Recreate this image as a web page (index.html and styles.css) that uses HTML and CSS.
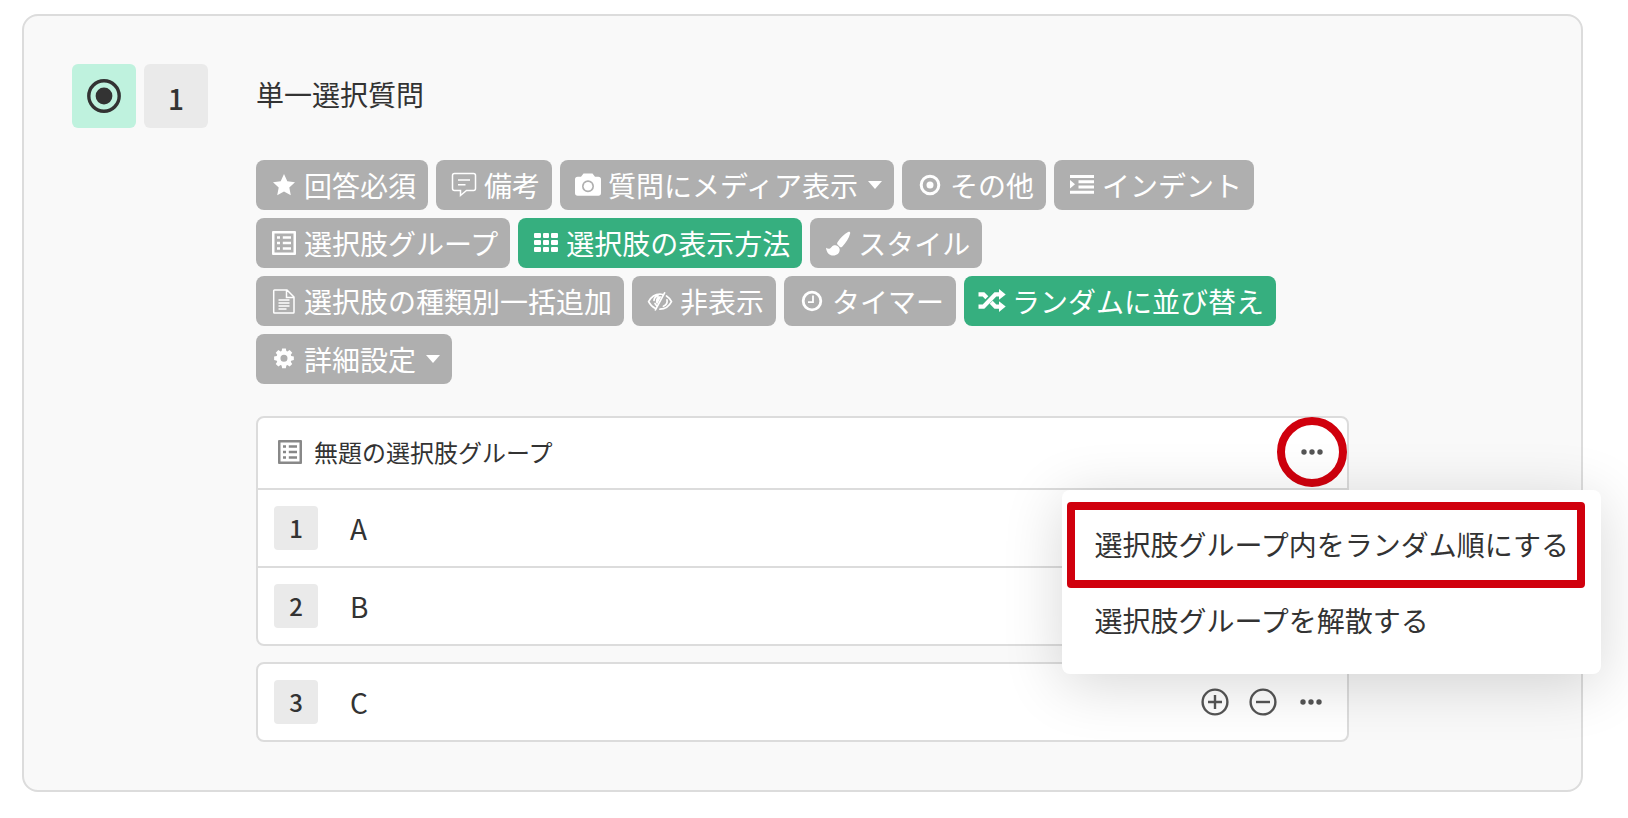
FILE: index.html
```
<!DOCTYPE html>
<html lang="ja">
<head>
<meta charset="utf-8">
<title>単一選択質問</title>
<link rel="stylesheet" href="styles.css">
</head>
<body>
<svg class="defs" aria-hidden="true">
  <symbol id="i-list" viewBox="0 0 24 24"><path fill-rule="evenodd" d="M1 0h22a1 1 0 0 1 1 1v22a1 1 0 0 1-1 1H1a1 1 0 0 1-1-1V1a1 1 0 0 1 1-1zM2.500 2.500v19h19v-19zM5 5.200h3v2.600H5zM10.800 5.200H19v2.600h-8.200zM5 10.800h3v2.400H5zM10.800 10.800H19v2.400h-8.200zM5 16.200h3v2.600H5zM10.800 16.200H19v2.600h-8.200z"/></symbol>
  <symbol id="i-dots" viewBox="0 0 24 24"><circle cx="4" cy="12" r="2.7"/><circle cx="12" cy="12" r="2.7"/><circle cx="20" cy="12" r="2.7"/></symbol>
</svg>
<main class="card">
  <div class="marks">
    <span class="mark mark-type"><svg viewBox="0 0 34 34" width="34" height="34" aria-hidden="true"><circle cx="17" cy="17" r="15.2" fill="none" stroke="currentColor" stroke-width="3.4"/><circle cx="17" cy="17" r="8.4" fill="currentColor"/></svg></span>
    <span class="mark mark-number">1</span>
  </div>
  <section class="question">
    <h1 class="title">単一選択質問</h1>
    <div class="tags">
      <button class="tag"><svg class="icon" viewBox="0 0 32 24"><path d="M16 1l3.300 7.200 7.700 1-5.700 5.300 1.500 7.700L16 18.400l-6.800 3.800 1.500-7.700L5 9.200l7.700-1z"/></svg>回答必須</button>
      <button class="tag"><svg class="icon" viewBox="0 0 32 24"><path fill="none" stroke="currentColor" stroke-width="1.5" d="M6.500.500h19a2 2 0 0 1 2 2v13a2 2 0 0 1-2 2h-7L12.500 22.500v-5h-6a2 2 0 0 1-2-2v-13a2 2 0 0 1 2-2zM10 7h12M10 11.700h7.500"/></svg>備考</button>
      <button class="tag"><svg class="icon" viewBox="0 0 32 24"><path fill-rule="evenodd" d="M11.500.5h9l2.500 3.200h3.300a2.700 2.700 0 0 1 2.700 2.700v13.600a2.700 2.700 0 0 1-2.700 2.700H5.700A2.700 2.700 0 0 1 3 20V6.400a2.700 2.700 0 0 1 2.700-2.700H9zM16 7.300a6 6 0 1 0 0 12 6 6 0 0 0 0-12z"/><circle cx="16" cy="13.300" r="4.300"/></svg>質問にメディア表示<span class="caret"></span></button>
      <button class="tag"><svg class="icon" viewBox="0 0 32 24"><circle cx="16" cy="12" r="8.800" fill="none" stroke="currentColor" stroke-width="3"/><circle cx="16" cy="12" r="3.500"/></svg>その他</button>
      <button class="tag"><svg class="icon" viewBox="0 0 32 24"><path d="M4 2h24v3H4zM12.500 7.200H28v3H12.500zM12.500 12.400H28v3H12.500zM4 17.700h24v3H4zM4 7l5 4.300-5 4.300z"/></svg>インデント</button>
      <button class="tag"><svg class="icon" viewBox="0 0 32 24"><use href="#i-list" x="4" y="0" width="24" height="24"/></svg>選択肢グループ</button>
      <button class="tag tag-on"><svg class="icon" viewBox="0 0 32 24"><path d="M5 2h5a1 1 0 0 1 1 1v3a1 1 0 0 1-1 1H5a1 1 0 0 1-1-1V3a1 1 0 0 1 1-1zM14 2h4a1 1 0 0 1 1 1v3a1 1 0 0 1-1 1h-4a1 1 0 0 1-1-1V3a1 1 0 0 1 1-1zM22 2h5a1 1 0 0 1 1 1v3a1 1 0 0 1-1 1h-5a1 1 0 0 1-1-1V3a1 1 0 0 1 1-1zM5 9h5a1 1 0 0 1 1 1v3a1 1 0 0 1-1 1H5a1 1 0 0 1-1-1v-3a1 1 0 0 1 1-1zM14 9h4a1 1 0 0 1 1 1v3a1 1 0 0 1-1 1h-4a1 1 0 0 1-1-1v-3a1 1 0 0 1 1-1zM22 9h5a1 1 0 0 1 1 1v3a1 1 0 0 1-1 1h-5a1 1 0 0 1-1-1v-3a1 1 0 0 1 1-1zM5 16h5a1 1 0 0 1 1 1v3a1 1 0 0 1-1 1H5a1 1 0 0 1-1-1v-3a1 1 0 0 1 1-1zM14 16h4a1 1 0 0 1 1 1v3a1 1 0 0 1-1 1h-4a1 1 0 0 1-1-1v-3a1 1 0 0 1 1-1zM22 16h5a1 1 0 0 1 1 1v3a1 1 0 0 1-1 1h-5a1 1 0 0 1-1-1v-3a1 1 0 0 1 1-1z"/></svg>選択肢の表示方法</button>
      <button class="tag"><svg class="icon" viewBox="0 0 32 24"><path d="M26.500.8c1-.4 2 .4 1.700 1.500-1.300 5-4 9.500-8 13.400-.8.800-1.800.7-2.500 0l-2-2c-.7-.7-.8-1.600-.2-2.500C18.500 7 22 3.200 26.500.8zM13.500 14.200c2.500.4 4 2 4.200 4.300.1 3.800-2.700 6-6.500 6-3.600 0-6.500-2.300-7.200-7.800 1.400.9 2.800 1.400 3.900.8 1.600-.8 2.200-3.700 5.600-3.300z"/></svg>スタイル</button>
      <button class="tag"><svg class="icon" viewBox="0 0 32 24"><path fill="none" stroke="currentColor" stroke-width="1.500" d="M6.500 1H19l7 7v15.200a.8.800 0 0 1-.8.800H6.500a.8.800 0 0 1-.8-.8V1.800a.8.800 0 0 1 .8-.8zM18.500 1v7.500H26M10.500 11h11M10.500 14h11M10.500 17h11M10.500 20h8"/></svg>選択肢の種類別一括追加</button>
      <button class="tag"><svg class="icon" viewBox="0 0 32 24"><g fill="none" stroke="currentColor" stroke-width="1.700" stroke-linecap="round"><path d="M11.500 19.600C8.500 18.200 6 15.500 4.600 12.700 7 8.200 11.200 5.200 16 5.200c1 0 1.800.1 2.600.3M22.500 6.900c2 1.200 3.800 3.200 5 5.800-2.300 4.500-6.700 7.500-11.500 7.500M11.400 20.900L20.600 3.800M10 11.300c.2-2.200 2-4.100 4-4.500M11 14.500c.4.900 1 1.700 1.800 2.200M23 10.800c.6 2.900-1 5.300-3.600 6.400"/></g><path d="M14.500 7.200h3l-4.300 8c-2-1.500-2-6 1.300-8z"/></svg>非表示</button>
      <button class="tag"><svg class="icon" viewBox="0 0 32 24"><circle cx="16" cy="12" r="8.800" fill="none" stroke="currentColor" stroke-width="2.800"/><path fill="none" stroke="currentColor" stroke-width="1.800" d="M17 6.500v6.700h-5"/></svg>タイマー</button>
      <button class="tag tag-on"><svg class="icon" viewBox="0 0 32 24"><path d="M2.500 3.300h5.800l4 4-3 3L6.700 7.400H2.500zM2.500 15.600h4.200L18.500 3.300H23V0l6.700 5.400L23 10.700V7.400h-2.700L8.300 19.700H2.500zM16.700 11.800l3.600 3.800H23v-3.300l6.700 5.300L23 23v-3.300h-4.500l-4.800-4.900z"/></svg>ランダムに並び替え</button>
      <button class="tag"><svg class="icon" viewBox="0 0 32 24"><path transform="translate(1.900 .8) scale(.88)" fill-rule="evenodd" d="M13.900.7h4.200l.6 3 1.200.5 2.500-1.700 3 3L23.700 8l.5 1.200 3 .6V14l-3 .6-.5 1.200 1.700 2.500-3 3-2.500-1.700-1.200.5-.6 3h-4.200l-.6-3-1.200-.5-2.500 1.700-3-3 1.700-2.500-.5-1.200-3-.6V9.800l3-.6.500-1.200-1.700-2.500 3-3 2.500 1.700 1.200-.5zM16 7.900a4 4 0 1 0 0 8 4 4 0 0 0 0-8z"/></svg>詳細設定<span class="caret"></span></button>
    </div>
    <div class="choices">
      <div class="group">
        <header class="group-head">
          <svg class="group-icon" width="24" height="24" aria-hidden="true"><use href="#i-list"/></svg>
          <h2 class="group-title">無題の選択肢グループ</h2>
          <div class="menu-anchor">
            <button class="act act-ring" aria-label="メニュー"><svg width="24" height="24"><use href="#i-dots"/></svg></button>
            <div class="menu">
              <button class="menu-item menu-item-marked">選択肢グループ内をランダム順にする</button>
              <button class="menu-item">選択肢グループを解散する</button>
            </div>
          </div>
        </header>
        <div class="choice"><span class="choice-number">1</span><span class="choice-text">A</span></div>
        <div class="choice"><span class="choice-number">2</span><span class="choice-text">B</span></div>
      </div>
      <div class="group">
        <div class="choice"><span class="choice-number">3</span><span class="choice-text">C</span>
          <button class="act" aria-label="追加"><svg class="outline" viewBox="0 0 28 28" width="28" height="28"><circle cx="14" cy="14" r="12.400"/><path d="M14 7v14M7 14h14"/></svg></button>
          <button class="act" aria-label="削除"><svg class="outline" viewBox="0 0 28 28" width="28" height="28"><circle cx="14" cy="14" r="12.400"/><path d="M7 14h14"/></svg></button>
          <button class="act" aria-label="メニュー"><svg width="24" height="24"><use href="#i-dots"/></svg></button>
        </div>
      </div>
    </div>
  </section>
</main>
</body>
</html>
```
FILE: styles.css
```
* { box-sizing: border-box; }

body {
  margin: 0;
  padding: 14px 45px 26px 22px;
  background: #fff;
  color: #333;
  font-family: "Noto Sans CJK JP", "Noto Sans", sans-serif;
  font-size: 28px;
  line-height: 40px;
}

button {
  margin: 0;
  padding: 0;
  border: 0;
  background: none;
  color: inherit;
  font: inherit;
  cursor: pointer;
}

svg { fill: currentColor; overflow: visible; }

.defs { position: absolute; width: 0; height: 0; }

.outline { fill: none; stroke: currentColor; stroke-width: 2.4; }

.card {
  display: flex;
  gap: 48px;
  padding: 48px 232px 48px 48px;
  border: 2px solid #dcdcdc;
  border-radius: 16px;
  background: #f9f9f9;
}

.marks { display: flex; flex: none; gap: 8px; }

.mark {
  display: flex;
  align-items: center;
  justify-content: center;
  width: 64px;
  height: 64px;
  border-radius: 6px;
}

.mark-type { background: #bff2de; }

.mark-number { padding-top: 4px; background: #eaeaea; font-weight: 500; }

.question { flex: 1; min-width: 0; }

.title { margin: 0; padding: 10px 0 14px; font-size: 28px; font-weight: 400; line-height: 40px; }

.tags { display: flex; flex-wrap: wrap; gap: 8px; margin: 32px 0; }

.tag {
  display: flex;
  align-items: center;
  height: 50px;
  padding: 0 12px;
  border-radius: 8px;
  background: #afafaf;
  color: #fff;
  white-space: nowrap;
}

.tag-on { background: #36af7f; }

.icon { flex: none; width: 32px; height: 24px; margin-right: 4px; }

.caret {
  margin-left: 10px;
  border: 7px solid transparent;
  border-top: 8px solid #fff;
  border-bottom: 0;
}

.choices { display: grid; gap: 16px; }

.group { border: 2px solid #dcdcdc; border-radius: 8px; background: #fff; }

.group-head { display: flex; align-items: center; height: 70px; padding: 0 0 2px 20px; }

.group-icon { color: #888; }

.group-title { flex: 1; margin: 0 0 0 12px; font-size: 24px; font-weight: 400; line-height: 36px; }

.menu-anchor { position: relative; }

.choice { display: flex; align-items: center; height: 76px; padding: 0 12px 0 16px; }

.group-head + .choice, .choice + .choice { border-top: 2px solid #dcdcdc; height: 78px; }

.choice-number {
  width: 44px;
  border-radius: 4px;
  background: #eaeaea;
  font-size: 24px;
  font-weight: 500;
  line-height: 44px;
  text-align: center;
}

.choice-text { flex: 1; padding-left: 32px; }

.act { display: flex; align-items: center; justify-content: center; width: 48px; height: 48px; color: #555; }

.act-ring { width: 70px; height: 70px; border: 8px solid #d0000d; border-radius: 50%; }

.menu {
  position: absolute;
  z-index: 1;
  top: 73px;
  right: -254px;
  padding: 16px 0;
  border-radius: 8px;
  background: #fff;
  box-shadow: 0 10px 60px rgba(0, 0, 0, 0.16);
}

.menu-item {
  display: block;
  position: relative;
  width: 100%;
  height: 76px;
  padding: 0 32px;
  text-align: left;
  white-space: nowrap;
}

.menu-item-marked::after {
  content: "";
  position: absolute;
  inset: -4px 16px -6px 5px;
  border: 8px solid #d0000d;
  border-radius: 4px;
}
```
